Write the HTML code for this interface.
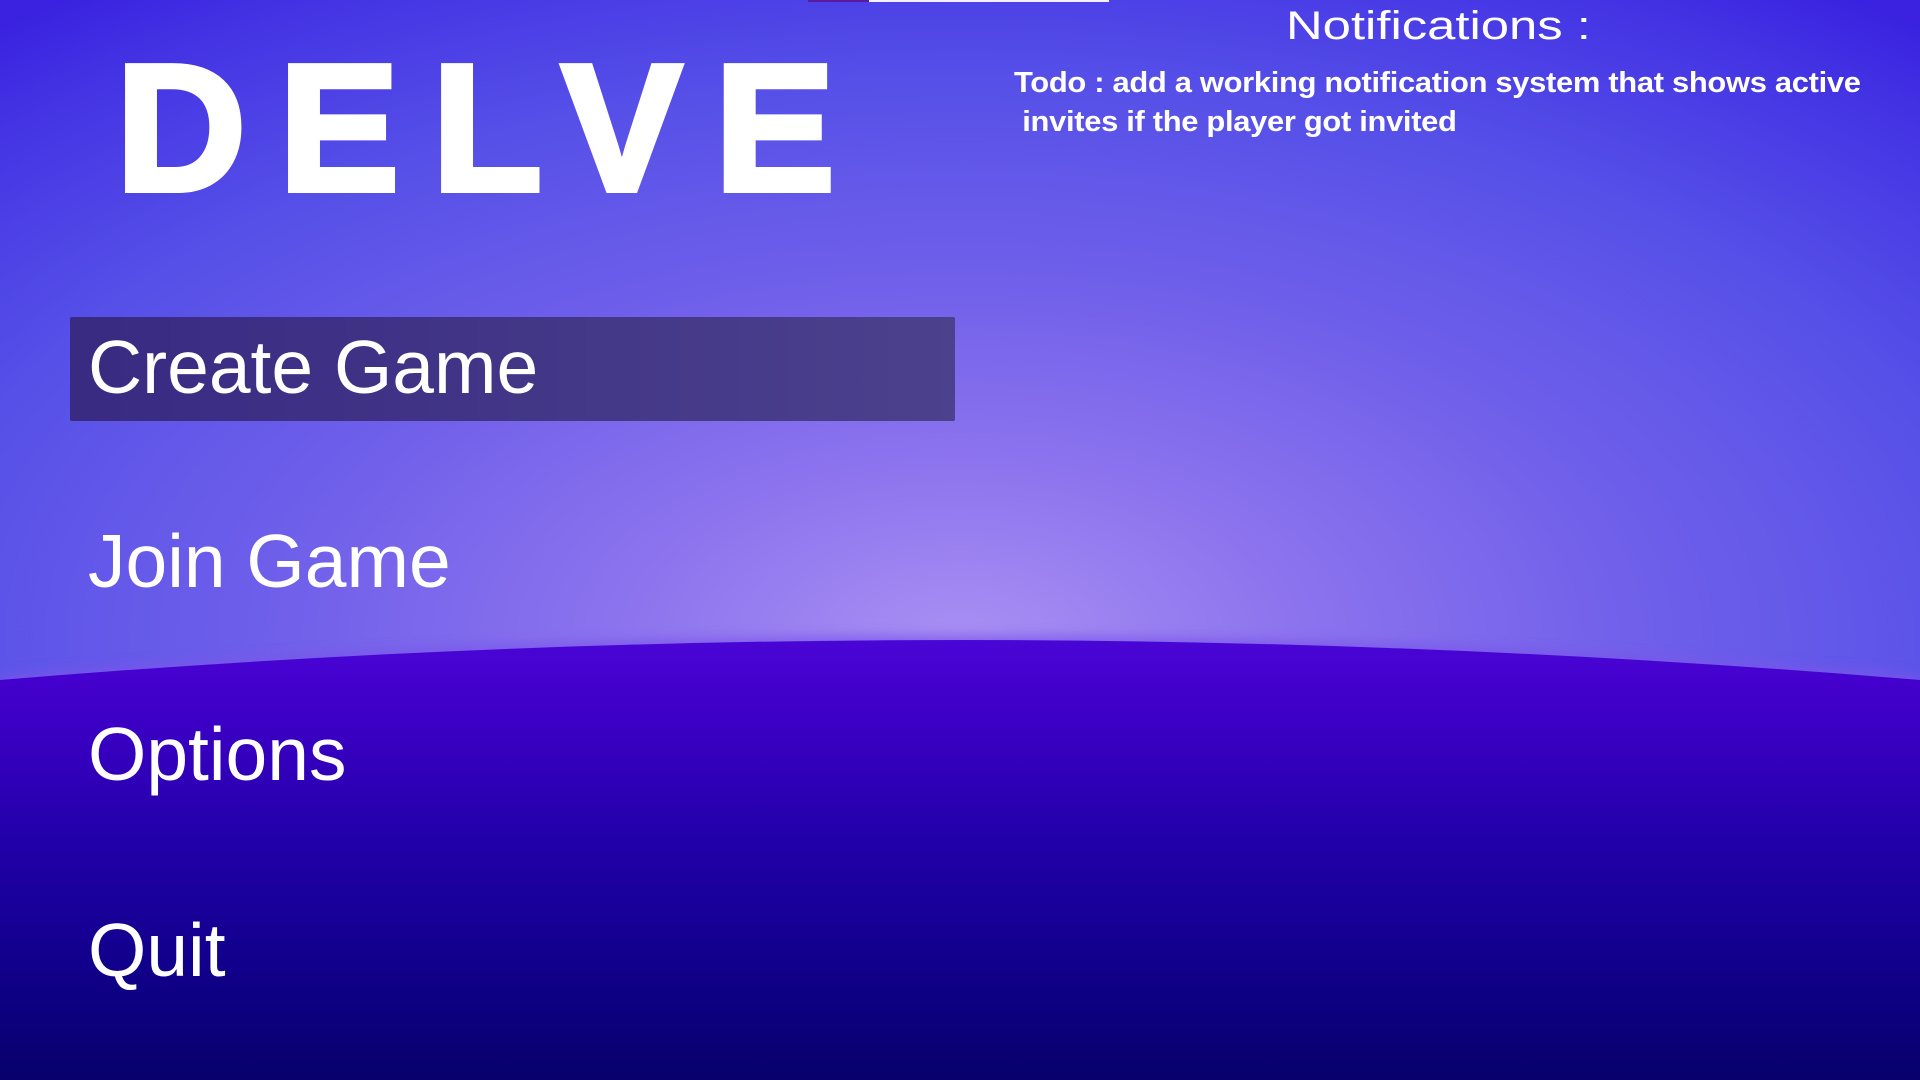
<!DOCTYPE html>
<html><head><meta charset="utf-8"><style>
html,body{margin:0;padding:0}
body{width:1920px;height:1080px;overflow:hidden;position:relative;font-family:"Liberation Sans",sans-serif;color:#fff;
background:radial-gradient(ellipse 1500px 800px at 960px 640px,#a88ff3 0%,#8d74ee 22%,#7060ea 45%,#5650e8 70%,#4434e4 90%,#3a22e0 100%);}
svg.h{position:absolute;left:0;top:0}
.t{position:absolute;white-space:nowrap}
.delve{left:116px;top:39px;font-size:180px;font-weight:bold;letter-spacing:33px;line-height:1;-webkit-text-stroke:6px #fff;font-family:"Liberation Sans",sans-serif}
.btn{position:absolute;left:70px;top:317px;width:885px;height:104px;background:linear-gradient(90deg,#392a82,#4b418c);border-radius:2px}
.m{left:88px;font-size:75px;line-height:1}
</style></head><body>
<svg class="h" width="1920" height="1080">
<defs>
<linearGradient id="g" x1="0" y1="636" x2="0" y2="1080" gradientUnits="userSpaceOnUse">
<stop offset="0" stop-color="#4a06d6"/>
<stop offset="0.12" stop-color="#4300cc"/>
<stop offset="0.45" stop-color="#2200aa"/>
<stop offset="0.75" stop-color="#10008a"/>
<stop offset="1" stop-color="#08006c"/>
</linearGradient>
<filter id="b"><feGaussianBlur stdDeviation="6"/></filter>
</defs>
<path d="M0 676 Q960 596 1920 676 L1920 1080 L0 1080 Z" fill="#7a55ea" filter="url(#b)" opacity="0.8"/>
<path d="M0 680 Q960 600 1920 680 L1920 1080 L0 1080 Z" fill="url(#g)"/>
<rect x="808" y="0" width="61" height="2" fill="#5a1aa0"/>
<rect x="869" y="0" width="240" height="2" fill="#f4f0ff"/>
</svg>
<div class="t delve">DELVE</div>
<div class="t" style="left:1286px;top:4px;font-size:40px;transform:scaleX(1.27);transform-origin:left top">Notifications :</div>
<div class="t" style="left:1014px;top:64px;font-size:29px;font-weight:bold;line-height:39px;letter-spacing:-0.3px;transform:scaleX(1.066);transform-origin:left top">Todo : add a working notification system that shows active<br>&nbsp;invites if the player got invited</div>
<div class="btn"></div>
<div class="t m" style="top:330px">Create Game</div>
<div class="t m" style="top:524px">Join Game</div>
<div class="t m" style="top:717px">Options</div>
<div class="t m" style="top:913px">Quit</div>
</body></html>
